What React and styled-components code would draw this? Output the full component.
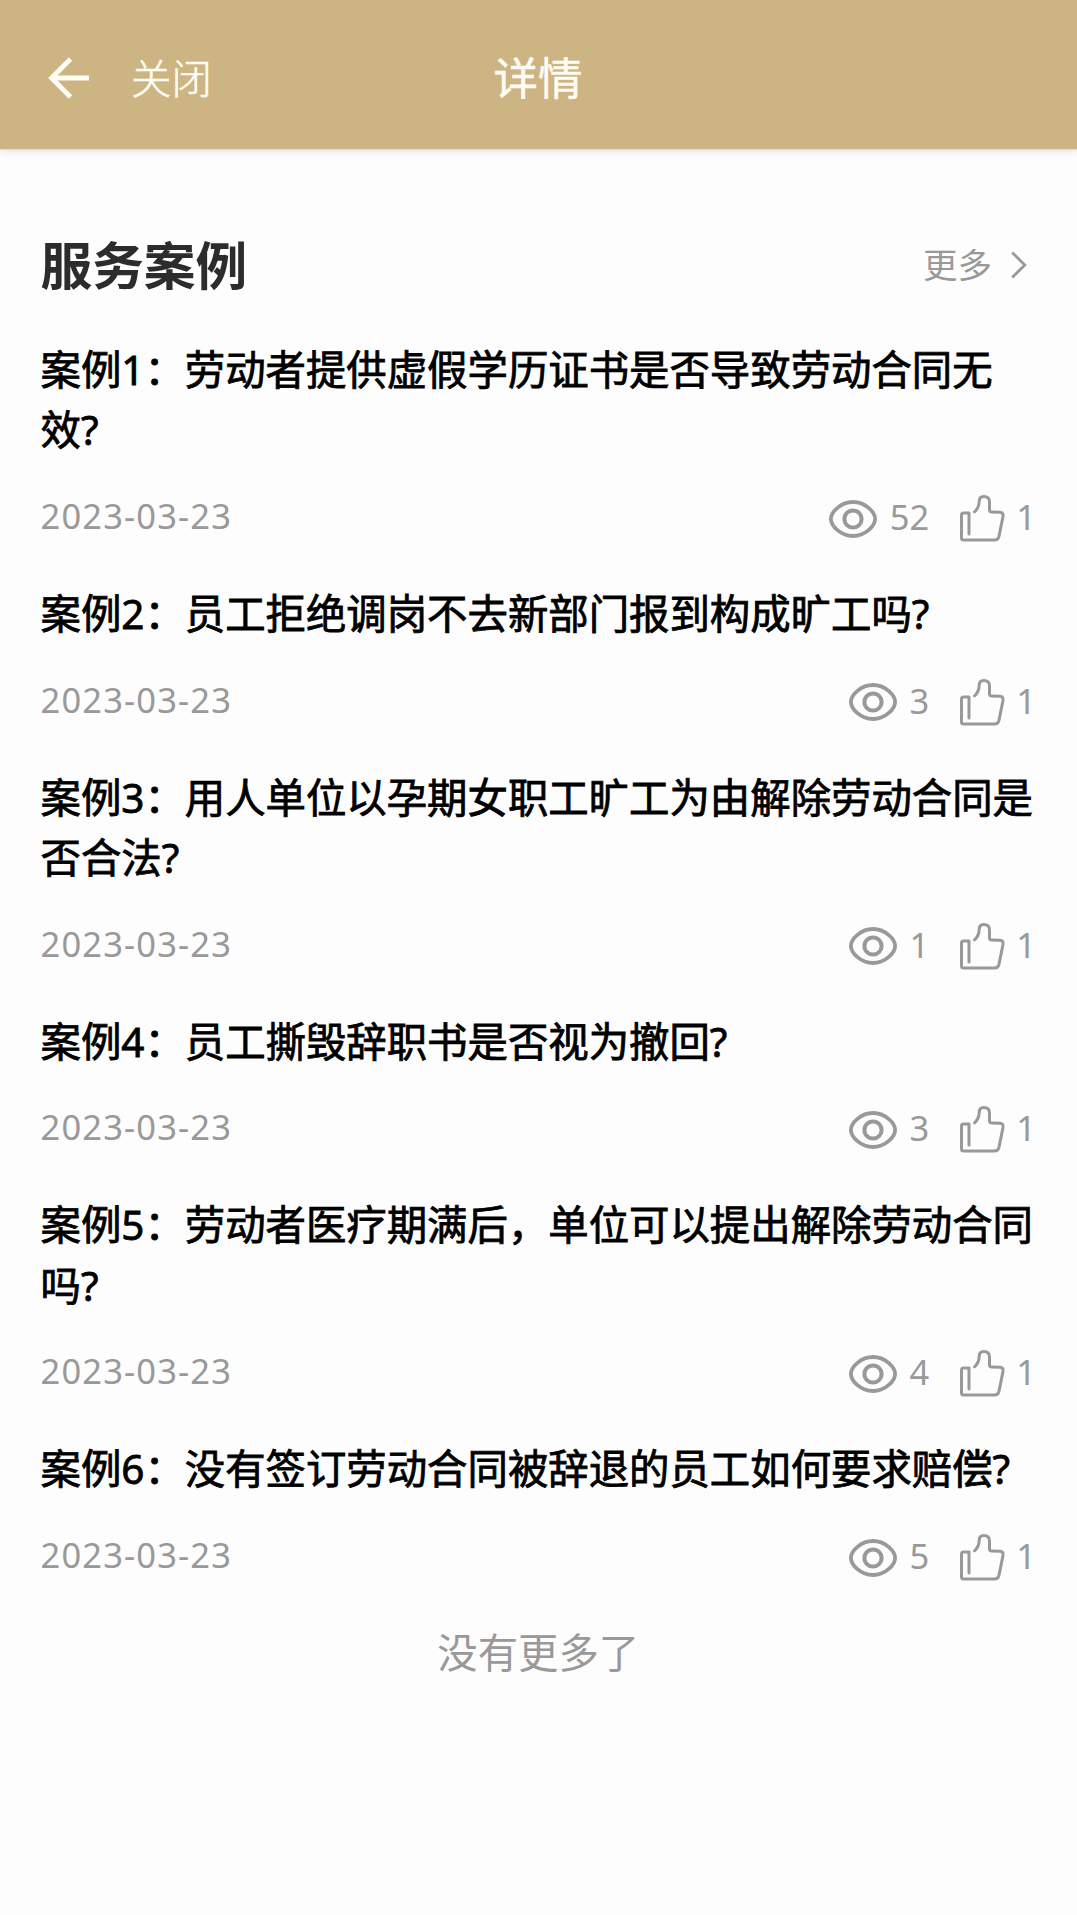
import styled, { createGlobalStyle } from "styled-components"

const cases = [
  { id: 1, title: "案例1：劳动者提供虚假学历证书是否导致劳动合同无效?", date: "2023-03-23", views: 52, likes: 1 },
  { id: 2, title: "案例2：员工拒绝调岗不去新部门报到构成旷工吗?", date: "2023-03-23", views: 3, likes: 1 },
  { id: 3, title: "案例3：用人单位以孕期女职工旷工为由解除劳动合同是否合法?", date: "2023-03-23", views: 1, likes: 1 },
  { id: 4, title: "案例4：员工撕毁辞职书是否视为撤回?", date: "2023-03-23", views: 3, likes: 1 },
  { id: 5, title: "案例5：劳动者医疗期满后，单位可以提出解除劳动合同吗?", date: "2023-03-23", views: 4, likes: 1 },
  { id: 6, title: "案例6：没有签订劳动合同被辞退的员工如何要求赔偿?", date: "2023-03-23", views: 5, likes: 1 },
]

function BackIcon() {
  return (
    <svg width="42" height="42" viewBox="0 0 42 42" fill="none" stroke="currentColor" strokeWidth="4.8">
      <path d="M22.5 2L3.5 21L22.5 40M3.5 21H41" />
    </svg>
  )
}

function ChevronIcon() {
  return (
    <svg width="16" height="28" viewBox="0 0 16 28" fill="none" stroke="currentColor" strokeWidth="2.8">
      <path d="M1.2 1.5L13.8 14L1.2 26.5" />
    </svg>
  )
}

function EyeIcon() {
  return (
    <svg width="48" height="40" viewBox="0 0 48 40" fill="none" stroke="currentColor" strokeWidth="3.8">
      <path d="M1.9 20C1.9 13 12 3 24 3S46.1 13 46.1 20S36 37 24 37S1.9 27 1.9 20Z" />
      <circle cx="24" cy="20" r="8.6" strokeWidth="4" />
    </svg>
  )
}

function LikeIcon() {
  return (
    <svg
      width="45"
      height="47"
      viewBox="0 0 45 47"
      fill="none"
      stroke="currentColor"
      strokeWidth="3"
      strokeLinecap="round"
      strokeLinejoin="round"
    >
      <path d="M9 39V18H3.6Q1.5 18 1.5 20V43Q1.5 45 3.5 45H34.5Q38 45 38.9 41.6L43 21.5Q43.6 17.4 40 17.3L31.6 17Q29.4 17 29.5 14.8V7.2Q29.5 1.5 23.8 1.5Q19.3 1.5 19.2 6.4Q19.1 12.8 14.5 16.8" />
    </svg>
  )
}

export default function App() {
  return (
    <>
      <GlobalStyle />
      <Header>
        <Nav>
          <IconButton aria-label="返回"><BackIcon /></IconButton>
          <CloseButton>关闭</CloseButton>
        </Nav>
        <PageTitle>详情</PageTitle>
      </Header>
      <Main>
        <SectionHead>
          <h2>服务案例</h2>
          <More href="#">更多<ChevronIcon /></More>
        </SectionHead>
        {cases.map((item) => (
          <Case key={item.id}>
            <CaseTitle>{item.title}</CaseTitle>
            <CaseInfo>
              <time>{item.date}</time>
              <Stats>
                <Stat $gap="13px"><EyeIcon /><span>{item.views}</span></Stat>
                <Stat $gap="11px"><LikeIcon /><span>{item.likes}</span></Stat>
              </Stats>
            </CaseInfo>
          </Case>
        ))}
        <NoMore>没有更多了</NoMore>
      </Main>
    </>
  )
}

const GlobalStyle = createGlobalStyle`
  * {
    box-sizing: border-box;
  }

  body {
    margin: 0;
    min-height: 100vh;
    background-color: #fdfdfd;
    color: #000;
    font-family: "Noto Sans", "Noto Sans CJK SC", sans-serif;
  }

  h1, h2, h3, p {
    margin: 0;
  }

  svg {
    display: block;
    flex-shrink: 0;
  }

  button {
    padding: 0;
    border: 0;
    background: none;
    color: inherit;
    font-family: inherit;
  }
`;

const Header = styled.header`
  display: grid;
  grid-template-columns: 1fr auto 1fr;
  align-items: center;
  height: 149px;
  padding: 7px 49px 0 48px;
  background-color: #ccb583;
  color: #fffdf3;
  box-shadow: 0 1px 1px #ecdccb, 0 2px 8px #0000001c;
`;

const Nav = styled.nav`
  display: flex;
  align-items: center;
  gap: 41px;
`;

const IconButton = styled.button`
  display: flex;
`;

const CloseButton = styled.button`
  font-size: 40.4px;
  font-weight: 300;
  line-height: 60px;
  padding-top: 1px;
  -webkit-text-stroke: 0.5px;
`;

const PageTitle = styled.h1`
  font-size: 44.4px;
  font-weight: 400;
  line-height: 60px;
  -webkit-text-stroke: 0.5px;
`;

const Main = styled.main`
  padding: 85px 41px 0 40.5px;
`;

const SectionHead = styled.div`
  display: flex;
  align-items: center;
  justify-content: space-between;
  height: 62px;
  margin-bottom: 44px;

  h2 {
    color: #2c2c2c;
    font-size: 51.7px;
    font-weight: 700;
    line-height: 62px;
  }
`;

const More = styled.a`
  display: flex;
  align-items: center;
  gap: 19px;
  padding-right: 9px;
  color: #999;
  font-size: 34.5px;
  line-height: 48px;
  text-decoration: none;
`;

const Case = styled.article`
  padding-bottom: 40.4px;
`;

const CaseTitle = styled.h3`
  margin-right: -5px;
  font-size: 40.4px;
  font-weight: 400;
  line-height: 60.3px;
  word-break: break-all;
  -webkit-text-stroke: 0.8px;
`;

const CaseInfo = styled.div`
  display: flex;
  align-items: center;
  justify-content: space-between;
  height: 50px;
  margin-top: 33px;
  color: #999;
  font-size: 34.5px;
  line-height: 46px;

  time {
    padding-bottom: 5px;
    letter-spacing: 1.15px;
  }
`;

const Stats = styled.div`
  display: flex;
  align-items: center;
  gap: 31px;
`;

const Stat = styled.span`
  display: flex;
  align-items: center;
  gap: ${({ $gap }) => $gap};

  span {
    padding-bottom: 3px;
  }
`;

const NoMore = styled.p`
  color: #999;
  font-size: 40.4px;
  line-height: 60px;
  text-align: center;
`;
